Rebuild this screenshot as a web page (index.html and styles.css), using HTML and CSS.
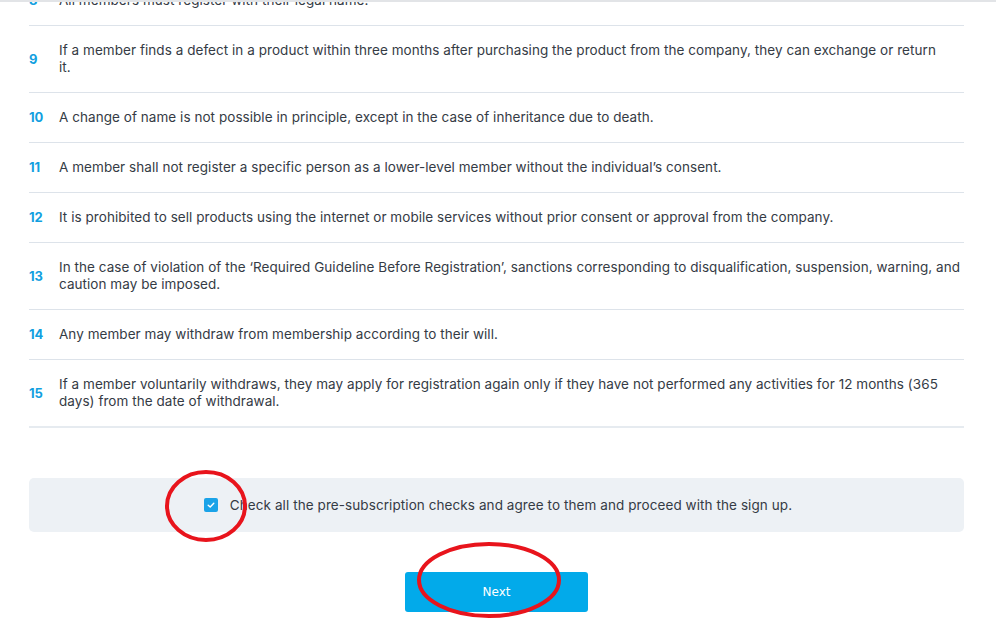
FILE: index.html
```html
<!DOCTYPE html>
<html lang="en">
<head>
<meta charset="utf-8">
<title>Guidelines</title>
<link rel="stylesheet" href="styles.css">
</head>
<body>
<div class="topline"></div>
<main class="page">
  <ul class="rules">
    <li class="rule"><span class="num">8</span><p class="txt">All members must register with their legal name.</p></li>
    <li class="rule"><span class="num">9</span><p class="txt">If a member finds a defect in a product within three months after purchasing the product from the company, they can exchange or return<br>it.</p></li>
    <li class="rule"><span class="num">10</span><p class="txt">A change of name is not possible in principle, except in the case of inheritance due to death.</p></li>
    <li class="rule"><span class="num">11</span><p class="txt">A member shall not register a specific person as a lower-level member without the individual’s consent.</p></li>
    <li class="rule"><span class="num">12</span><p class="txt">It is prohibited to sell products using the internet or mobile services without prior consent or approval from the company.</p></li>
    <li class="rule"><span class="num">13</span><p class="txt">In the case of violation of the ‘Required Guideline Before Registration’, sanctions corresponding to disqualification, suspension, warning, and<br>caution may be imposed.</p></li>
    <li class="rule"><span class="num">14</span><p class="txt">Any member may withdraw from membership according to their will.</p></li>
    <li class="rule"><span class="num">15</span><p class="txt">If a member voluntarily withdraws, they may apply for registration again only if they have not performed any activities for 12 months (365<br>days) from the date of withdrawal.</p></li>
  </ul>

  <div class="agree">
    <label class="agree-label">
      <span class="box"><svg viewBox="0 0 14 14" width="14" height="14"><path d="M4.2 7.2 L6.2 9 L9.8 5.2" fill="none" stroke="#fff" stroke-width="1.4" stroke-linecap="round" stroke-linejoin="round"/></svg></span>
      <span class="agree-text">Check all the pre-subscription checks and agree to them and proceed with the sign up.</span>
    </label>
    <svg class="mark mark-1" viewBox="0 0 84 74" width="84" height="74"><ellipse cx="42" cy="37" rx="39" ry="34" fill="none" stroke="#e8141c" stroke-width="4"/></svg>
  </div>

  <div class="actions">
    <button class="next" type="button">Next</button>
    <svg class="mark mark-2" viewBox="0 0 146 80" width="146" height="80"><ellipse cx="73" cy="40" rx="70" ry="36" fill="none" stroke="#e8141c" stroke-width="4"/></svg>
  </div>
</main>
</body>
</html>
```
FILE: styles.css
```css
* { box-sizing: border-box; }
html, body { margin: 0; padding: 0; background: #fff; }
body {
  font-family: "Inter", "Liberation Sans", sans-serif;
  color: #353b45;
  overflow: hidden;
  height: 622px;
}
.topline {
  position: fixed;
  top: 0; left: 0; right: 0;
  height: 2px;
  background: #e2e4e7;
  z-index: 5;
}
.page {
  width: 935px;
  margin: -24px 0 0 29px;
}
.rules { list-style: none; margin: 0; padding: 0; }
.rule {
  display: flex;
  align-items: center;
  padding: 16px 0;
  border-bottom: 1px solid #dde3ea;
  line-height: 17px;
}
.rule:last-child { border-bottom: 2px solid #e6ebf0; }
.num {
  flex: 0 0 30px;
  color: #129fdf;
  font-weight: 700;
  font-size: 13px;
}
.txt {
  margin: 0;
  font-size: 13.5px;
  line-height: 17px;
  letter-spacing: 0.05px;
}
.agree {
  position: relative;
  margin-top: 50px;
  height: 54px;
  background: #edf1f5;
  border-radius: 5px;
  display: flex;
  align-items: center;
  justify-content: center;
}
.agree-label {
  display: flex;
  align-items: center;
  gap: 12px;
  font-size: 13.5px;
  letter-spacing: 0.08px;
  padding-left: 3px;
}
.box {
  width: 14px; height: 14px;
  background: #1aa3e8;
  border-radius: 2px;
  display: flex;
}
.actions {
  position: relative;
  display: flex;
  justify-content: center;
  margin-top: 40px;
}
.next {
  width: 183px;
  height: 40px;
  border: 0;
  border-radius: 3px;
  background: #02aaea;
  color: #fff;
  font-family: "DejaVu Sans", sans-serif;
  font-size: 12px;
}
.mark { position: absolute; pointer-events: none; }
.mark-1 { left: 135px; top: -9px; }
.mark-2 { left: 387px; top: -32px; }
```
